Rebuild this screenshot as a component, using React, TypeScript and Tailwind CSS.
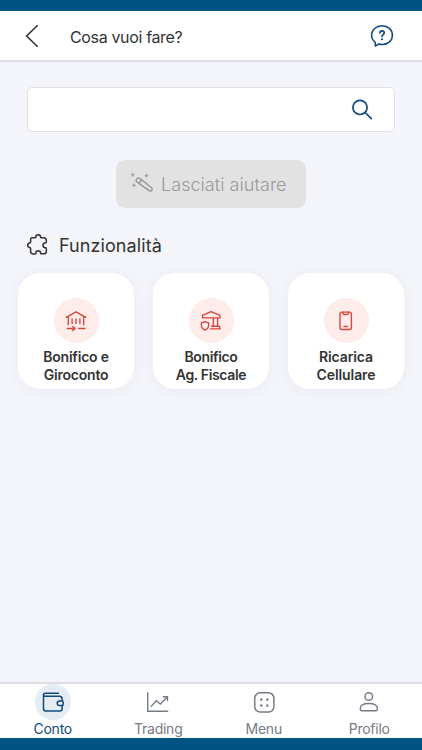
import React from "react";

interface IconProps {
  className?: string;
}

function BackIcon() {
  return (
    <svg className="h-6 w-6" viewBox="0 0 24 24" fill="none" stroke="currentColor" strokeWidth="1.6" strokeLinecap="round">
      <path d="M17.2 1.7 6.6 12 17.2 22.3" />
    </svg>
  );
}

function HelpIcon() {
  return (
    <svg className="h-6 w-6" viewBox="0 0 24 24" fill="none" stroke="currentColor" strokeWidth="1.5" strokeLinecap="round" strokeLinejoin="round">
      <path d="M5.3 22.1V18.4A9.7 9.3 0 0 1 1.6 11.3C1.6 5.8 6.3 1.7 12.1 1.7S22.4 5.8 22.4 11.2 17.9 20.5 12.3 20.5C11 20.5 9.9 20.3 8.9 20Z" />
      <path d="M9.9 8.9C10 7.5 10.9 6.9 12 6.9S14.2 7.7 14.2 8.9C14.2 10.6 12 10.6 12 12.5" strokeWidth="1.7" />
      <circle cx="12" cy="15.3" r="1" fill="currentColor" stroke="none" />
    </svg>
  );
}

function SearchIcon() {
  return (
    <svg className="h-6 w-6" viewBox="0 0 24 24" fill="none" stroke="currentColor" strokeWidth="1.7" strokeLinecap="round">
      <circle cx="10" cy="9.4" r="7.1" />
      <path d="m15.1 14.5 6.2 6.2" />
    </svg>
  );
}

function WandIcon() {
  return (
    <svg className="h-6 w-6" viewBox="0 0 24 24" fill="none" stroke="currentColor" strokeWidth="1.5" strokeLinecap="round" strokeLinejoin="round">
      <path d="M6.7 7.1C7.6 5.8 8.9 5.8 10 6.7L21.3 15.5C23.4 17.2 21.5 20.2 19.2 18.7L7.1 10.2C5.9 9.3 5.8 8.3 6.7 7.1Z" />
      <path d="m11.5 8-2.5 3.3" />
      <path d="M2.8.8 3.4 2.2 4.8 2.8 3.4 3.4 2.8 4.8 2.2 3.4.8 2.8 2.2 2.2ZM16.5 1.7 17.1 3.1 18.5 3.7 17.1 4.3 16.5 5.7 15.9 4.3 14.5 3.7 15.9 3.1ZM4.1 11.3 4.7 12.7 6.1 13.3 4.7 13.9 4.1 15.3 3.5 13.9 2.1 13.3 3.5 12.7Z" fill="currentColor" strokeWidth="0.2" />
    </svg>
  );
}

function PuzzleIcon() {
  return (
    <svg className="h-6 w-6" viewBox="0 0 24 24" fill="none" stroke="currentColor" strokeWidth="1.5" strokeLinecap="round" strokeLinejoin="round">
      <path d="M6.2 4.8H9.3C9.6 4.8 9.7 4.5 9.7 4.2C9.8 2.7 10.8 1.8 12.2 1.8S14.6 2.8 14.6 4.2C14.6 4.6 14.8 4.8 15.1 4.8H17.6C19.2 4.8 20.3 5.8 20.3 7.4V9.2C20.3 9.7 20 9.8 19.6 9.8C18 9.8 17 10.8 17 12.3S18 14.8 19.6 14.8C20.1 14.8 20.3 15 20.3 15.4V18.4C20.3 20 19.4 20.8 17.8 20.8H15.1C14.8 20.8 14.7 20.5 14.7 20.2C14.6 18.7 13.7 17.8 12.3 17.8S9.9 18.8 9.9 20.3C9.9 20.7 9.7 20.9 9.3 20.9H7.3C5.6 20.9 4.6 20 4.6 18.3V15.6C4.6 15.1 4.4 14.9 4 14.8C2.6 14.5 1.7 13.7 1.7 12.3S2.6 10.1 4 9.8C4.4 9.7 4.6 9.5 4.6 9V6.4C4.6 5.2 5.2 4.8 6.2 4.8Z" />
    </svg>
  );
}

function BankTransferIcon({ className }: IconProps) {
  return (
    <svg className={className} viewBox="0 0 24 24" fill="none" stroke="currentColor" strokeWidth="1.35" strokeLinecap="round" strokeLinejoin="round">
      <path d="M2.2 8.4 12 2.8 21.8 8.4M4.3 7.6V15.7M19.7 7.6V15.7M8.1 9.8V14.4M12 9.8V14.4M15.9 9.8V14.4" />
      <path d="M3.2 19.5H10.8M8.8 17.4 11 19.5 8.8 21.6M14.7 19.5H21" />
    </svg>
  );
}

function TaxOfficeIcon({ className }: IconProps) {
  return (
    <svg className={className} viewBox="0 0 24 24" fill="none" stroke="currentColor" strokeWidth="1.35" strokeLinecap="round" strokeLinejoin="round">
      <path d="M3.5 8.9V6.4L12 2.7 21 6.4V8.9ZM14.3 9.2V17M18.6 9.2V17M12.5 17.2H20.4L21.2 19.9H11.4" />
      <path d="M2.4 13.9 6 12.7 9.6 13.9V16.3C9.6 18.6 8.2 20.3 6 21C3.8 20.3 2.4 18.6 2.4 16.3Z" />
    </svg>
  );
}

function PhoneIcon({ className }: IconProps) {
  return (
    <svg className={className} viewBox="0 0 24 24" fill="none" stroke="currentColor" strokeWidth="1.4" strokeLinecap="round" strokeLinejoin="round">
      <rect x="6" y="3.1" width="11.4" height="17.4" rx="1.9" />
      <path d="M9 3.3V4.3Q9 5.5 10.2 5.5H13.2Q14.4 5.5 14.4 4.3V3.3M9.9 17.5H13.5" />
    </svg>
  );
}

function WalletIcon({ className }: IconProps) {
  return (
    <svg className={className} viewBox="0 0 24 24" fill="none" stroke="currentColor" strokeWidth="1.5" strokeLinecap="round" strokeLinejoin="round">
      <path d="M17.5 3.2H4.3C3.2 3.2 2.5 3.8 2.5 4.8S3.2 6.3 4.3 6.3H18.5C20.2 6.3 21.1 7.1 21.1 8.7V10.6M2.5 4.8V18.5C2.5 20.2 3.3 21 4.9 21H18.7C20.3 21 21.1 20.3 21.1 18.7V16.1" />
      <path d="M18.5 11H21C21.8 11 22.2 11.4 22.2 12.1V14.4C22.2 15.1 21.8 15.6 21 15.6H18.5C17.1 15.6 16.2 14.6 16.2 13.3S17.1 11 18.5 11Z" />
    </svg>
  );
}

function ChartIcon({ className }: IconProps) {
  return (
    <svg className={className} viewBox="0 0 24 24" fill="none" stroke="currentColor" strokeWidth="1.4">
      <path d="M1.7 2.2V21.2H22.2" />
      <path d="M4.9 16.9 10.2 10.8 14.3 14 21.1 7.3M16.9 6.8H21.5V11.3" />
    </svg>
  );
}

function GridIcon({ className }: IconProps) {
  return (
    <svg className={className} viewBox="0 0 24 24" fill="none" stroke="currentColor" strokeWidth="1.5">
      <rect x="2.7" y="2.8" width="19.2" height="19.2" rx="5.4" />
      <g fill="currentColor" stroke="none">
        <circle cx="9.3" cy="9.4" r="1.25" />
        <circle cx="15.3" cy="9.4" r="1.25" />
        <circle cx="9.3" cy="15.5" r="1.25" />
        <circle cx="15.3" cy="15.5" r="1.25" />
      </g>
    </svg>
  );
}

function ProfileIcon({ className }: IconProps) {
  return (
    <svg className={className} viewBox="0 0 24 24" fill="none" stroke="currentColor" strokeWidth="1.4" strokeLinejoin="round">
      <circle cx="11.8" cy="6.5" r="3.8" />
      <path d="M3.3 18.4C3.3 15.1 6.1 13.5 11.8 13.5S20.3 15.1 20.3 18.4V19.4Q20.3 20.8 18.9 20.8H4.7Q3.3 20.8 3.3 19.4Z" />
    </svg>
  );
}

const features = [
  { lines: ["Bonifico e", "Giroconto"], icon: BankTransferIcon, tracking: "tracking-[-0.2px]" },
  { lines: ["Bonifico", "Ag. Fiscale"], icon: TaxOfficeIcon, tracking: "tracking-[-0.35px]" },
  { lines: ["Ricarica", "Cellulare"], icon: PhoneIcon, tracking: "tracking-[-0.1px]" },
];

const tabs = [
  { id: "conto", label: "Conto", icon: WalletIcon },
  { id: "trading", label: "Trading", icon: ChartIcon },
  { id: "menu", label: "Menu", icon: GridIcon },
  { id: "profilo", label: "Profilo", icon: ProfileIcon },
];

export default function App() {
  const [activeTab, setActiveTab] = React.useState("conto");

  return (
    <div className="flex h-[750px] w-[422px] flex-col overflow-hidden border-t-[11px] border-b-[12px] border-[#005383] bg-[#f4f5fa] font-['Inter',sans-serif] text-[#333333]">
      {/* Header */}
      <header className="flex h-[51px] shrink-0 items-center border-b-2 border-[#dddde0] bg-white pl-5 pr-7 pt-px">
        <button aria-label="Indietro">
          <BackIcon />
        </button>
        <h1 className="ml-[26px] pt-0.5 text-[16px] leading-6 tracking-[-0.35px]">Cosa vuoi fare?</h1>
        <button aria-label="Aiuto" className="ml-auto text-[#114a7c]">
          <HelpIcon />
        </button>
      </header>

      <main className="flex flex-1 flex-col">
        <div className="mx-[27px] mt-[25px] flex h-[45px] items-center rounded-[5px] border border-[#e0e0e3] bg-white pr-5 text-[#114a7c]">
          <input aria-label="Cerca" className="min-w-0 flex-1 bg-transparent px-3 outline-none" />
          <SearchIcon />
        </div>

        <button className="mt-7 flex h-12 w-[190px] items-center self-center rounded-[9px] bg-[#e2e2e2] pl-[14px] text-[#999999]">
          <WandIcon />
          <span className="ml-[7px] whitespace-nowrap text-[18px] font-light tracking-[0.05px]">Lasciati aiutare</span>
        </button>

        <div className="ml-[26px] mt-[25px] flex h-6 items-center">
          <PuzzleIcon />
          <h2 className="ml-[9px] pt-px text-[18px] leading-6 tracking-[0.08px]">Funzionalità</h2>
        </div>

        <div className="mt-4 grid grid-cols-3 gap-[19px] px-[18px]">
          {features.map(({ lines, icon: Icon, tracking }) => (
            <button
              key={lines[1]}
              className="flex h-[116px] flex-col items-center rounded-[22px] bg-white pt-[25px] shadow-[0_2px_16px_rgba(40,50,90,0.05)]"
            >
              <span className="flex h-[45px] w-[45px] items-center justify-center rounded-full bg-[#fdecea] text-[#d9453a]">
                <Icon className="h-6 w-6" />
              </span>
              <span className={`mt-[5px] whitespace-nowrap text-[14px] font-semibold leading-[18px] ${tracking}`}>
                {lines[0]}
                <br />
                {lines[1]}
              </span>
            </button>
          ))}
        </div>
      </main>

      {/* Bottom tab bar */}
      <nav className="grid h-14 shrink-0 grid-cols-4 border-t-2 border-[#dddde0] bg-white">
        {tabs.map(({ id, label, icon: Icon }) => (
          <button
            key={id}
            onClick={() => setActiveTab(id)}
            className={`flex flex-col items-center ${activeTab === id ? "text-[#114a7c]" : "text-[#757b86]"}`}
          >
            <span
              className={`flex h-9 w-9 shrink-0 items-center justify-center rounded-full ${
                activeTab === id ? "bg-[#e5ecf3]" : ""
              }`}
            >
              <Icon className="h-6 w-6" />
            </span>
            <span className="text-[14px] leading-[18px] tracking-[-0.25px]">{label}</span>
          </button>
        ))}
      </nav>
    </div>
  );
}
